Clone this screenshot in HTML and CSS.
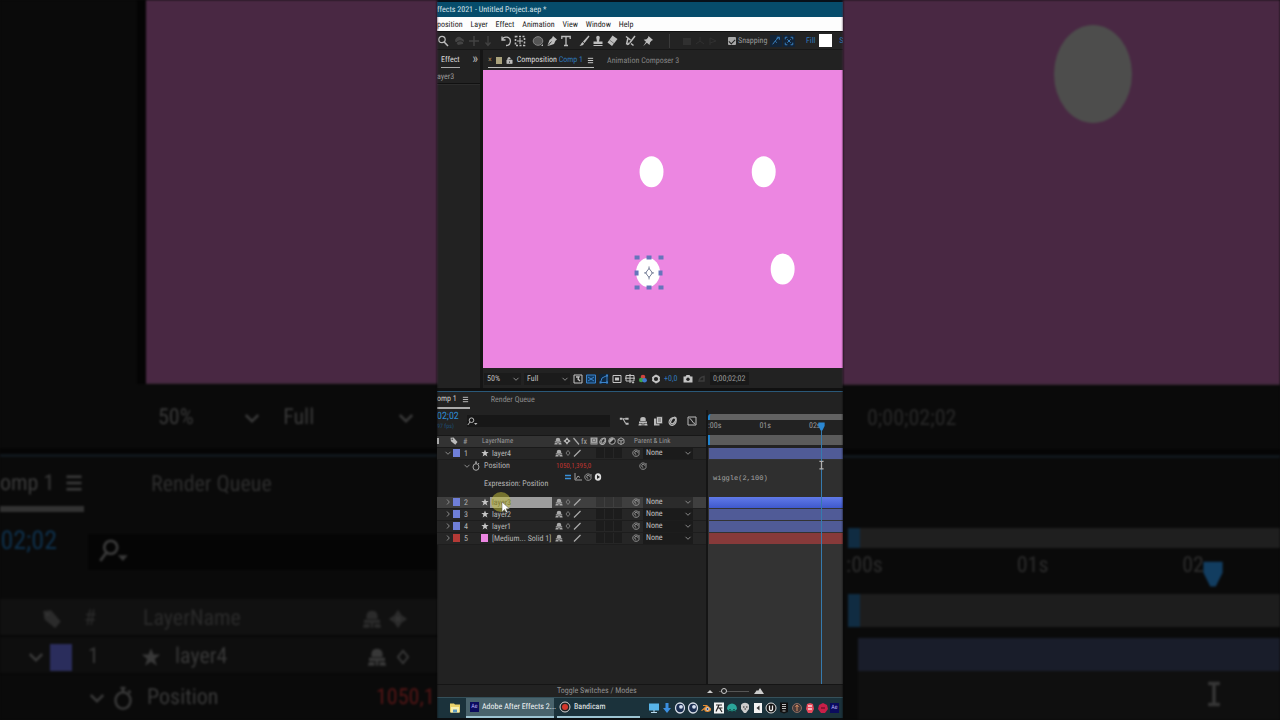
FILE: index.html
```
<!DOCTYPE html>
<html lang="en">
<head>
<meta charset="utf-8">
<title>Effects 2021 - Untitled Project.aep</title>
<link rel="stylesheet" href="styles.css">
</head>
<body>
<svg class="sprite" aria-hidden="true">
  <symbol id="chev" viewBox="0 0 8 8"><path d="M1.5 2.8 4 5.3 6.5 2.8" fill="none" stroke="currentColor"/></symbol>
  <symbol id="chev-r" viewBox="0 0 8 8"><path d="M3 1.5 5.3 4 3 6.5" fill="none" stroke="currentColor"/></symbol>
  <symbol id="menu" viewBox="0 0 8 8"><path d="M1 1.5h6M1 4h6M1 6.500h6" stroke="currentColor"/></symbol>
  <symbol id="star" viewBox="0 0 8 8"><path d="M4 .5 5 3h2.700L5.500 4.800 6.400 7.500 4 5.900 1.600 7.500 2.500 4.800.3 3H3z" fill="currentColor"/></symbol>
  <symbol id="shy" viewBox="0 0 8 8"><path d="M1.800 4V2.500a2.200 1.800 0 0 1 4.400 0V4zM.8 4.300h6.400v1.300H.8zM.8 6h2.200v1.500H.3zM5 6h2.200l.5 1.500H5zM3.500 5h1v2.500h-1z" fill="currentColor"/></symbol>
  <symbol id="sun" viewBox="0 0 8 8"><path d="M4 .3 5.500 2.500 7.700 4 5.500 5.500 4 7.700 2.500 5.500.3 4l2.200-1.500z" fill="currentColor"/><circle cx="4" cy="4" r="1.100" fill="#333"/></symbol>
  <symbol id="dia" viewBox="0 0 8 8"><path d="M4 1.500 6 4 4 6.500 2 4z" fill="none" stroke="currentColor" stroke-width=".8"/></symbol>
  <symbol id="slash" viewBox="0 0 8 8"><path d="M1 7.500 7.500 1" stroke="currentColor" stroke-width="1.200"/></symbol>
  <symbol id="bslash" viewBox="0 0 8 8"><path d="M1.500 1 7 7.500" stroke="currentColor" stroke-width="1.200"/></symbol>
  <symbol id="film" viewBox="0 0 8 8"><path d="M.5.500h7v7h-7z" fill="currentColor"/><path d="M2.500 2h3v2.500h-3zM1 6.300h6" stroke="#555" stroke-width=".6" fill="none"/></symbol>
  <symbol id="rings" viewBox="0 0 8 8"><g fill="none" stroke="currentColor" transform="rotate(35 4 4)"><ellipse cx="4" cy="3.500" rx="1.500" ry="3"/><ellipse cx="4" cy="4.500" rx="2.600" ry="3.200"/></g></symbol>
  <symbol id="half" viewBox="0 0 8 8"><circle cx="4" cy="4" r="3.300" fill="#222" stroke="currentColor"/><path d="M6.300 1.700A3.300 3.300 0 0 0 1.700 6.300z" fill="currentColor"/></symbol>
  <symbol id="cube" viewBox="0 0 8 8"><path d="M4 .8 7 2.500v3.500L4 7.500 1 6V2.500zM1 2.500 4 4l3-1.500M4 4v3.500" fill="none" stroke="currentColor" stroke-width=".9"/></symbol>
  <symbol id="whip" viewBox="0 0 8 8"><path d="M7 1v4.500c0 1-1.300 1.800-3 1.800A3.200 3.200 0 1 1 6.600 2.300M4.200 5.300a1.500 1.500 0 1 1 1.500-1.600" fill="none" stroke="currentColor" stroke-width=".9"/></symbol>
  <symbol id="watch" viewBox="0 0 8 10"><ellipse cx="4" cy="6" rx="3" ry="3.300" fill="none" stroke="currentColor"/><path d="M3 1h2M4 1v2M6.200 2l.8 1" stroke="currentColor" fill="none"/></symbol>
  <symbol id="tag" viewBox="0 0 8 8"><path d="M.5.800 3.600.5 7.500 5 5.300 7.700 1 4.200z" fill="currentColor"/><circle cx="2.200" cy="2.200" r=".7" fill="#333"/></symbol>
  <symbol id="find" viewBox="0 0 12 9"><circle cx="4.500" cy="3.200" r="2.300" fill="none" stroke="currentColor"/><path d="M3 5 .8 8" stroke="currentColor"/><path d="M7 6h3.500L8.800 8z" fill="currentColor"/></symbol>
  <symbol id="ibeam" viewBox="0 0 8 12"><path d="M1.500 1.500h5M4 2v8M1.500 10.500h5" fill="none" stroke="currentColor" stroke-width="1.500"/></symbol>
  <symbol id="head" viewBox="0 0 8 10"><path d="M.5.500h7v4L5 9.500H3L.5 4.500z" fill="currentColor"/></symbol>
  <symbol id="disc" viewBox="0 0 12 12"><ellipse cx="6" cy="6" rx="4.500" ry="5" fill="#1b2f52" stroke="#d8dfe8" stroke-width="1.300"/><circle cx="7" cy="4.800" r="1.900" fill="#d5dff0"/></symbol>
</svg>

<aside class="side side-left" aria-hidden="true">
  <div class="side-view"><div class="side-panel"></div><div class="side-canvas"></div></div>
  <div class="side-foot"><span class="side-pick">50% <svg><use href="#chev"/></svg></span><span class="side-pick wide">Full <svg><use href="#chev"/></svg></span></div>
  <div class="side-tabs"><span class="side-tab">omp 1 <svg><use href="#menu"/></svg></span><span>Render Queue</span></div>
  <div class="side-search"><span class="side-time">02;02</span><span class="side-box"><svg><use href="#find"/></svg></span></div>
  <div class="side-row side-head"><i></i><svg class="side-tag"><use href="#tag"/></svg><b>#</b><span>LayerName</span><svg><use href="#shy"/></svg><svg><use href="#sun"/></svg></div>
  <div class="side-row"><svg><use href="#chev"/></svg><i class="side-swatch"></i><b>1</b><svg class="side-star"><use href="#star"/></svg><span class="side-name">layer4</span><svg><use href="#shy"/></svg><svg><use href="#dia"/></svg></div>
  <div class="side-prop"><svg><use href="#chev"/></svg><svg class="side-watch"><use href="#watch"/></svg><span>Position</span><em>1050,1</em></div>
</aside>

<main class="app">
  <header class="title">ffects 2021 - Untitled Project.aep *</header>
  <nav class="menu"><button class="first">position</button><button>Layer</button><button>Effect</button><button>Animation</button><button>View</button><button>Window</button><button>Help</button></nav>
  <div class="tools">
    <div class="group lead"><button aria-label="Zoom"><svg viewBox="0 0 12 12"><circle cx="5" cy="4.500" r="3.200" fill="none" stroke="currentColor" stroke-width="1.200"/><path d="m7.200 7 3.800 4" stroke="currentColor" stroke-width="1.500"/></svg></button></div>
    <div class="group dim">
      <button aria-label="Orbit"><svg viewBox="0 0 12 12"><path d="M1 6c0-3 3-5 5-4l4 3-1 4-5 1z" fill="currentColor"/><path d="M2 8c3-3 6-3 9 1" stroke="#222" fill="none"/></svg></button>
      <button aria-label="Pan"><svg viewBox="0 0 12 12"><path d="M6 1v10M1 6h10" stroke="currentColor" stroke-width="1.500"/></svg></button>
      <button aria-label="Dolly"><svg viewBox="0 0 12 12"><path d="M6 1v9M3.500 7.500 6 10.500 8.500 7.500" fill="none" stroke="currentColor" stroke-width="1.200"/></svg></button>
    </div>
    <div class="group">
      <button aria-label="Rotate"><svg viewBox="0 0 12 12"><path d="M2 1.500v3.500h3.500M2.200 5A4.200 4.200 0 1 1 6 10.500" fill="none" stroke="currentColor" stroke-width="1.300"/></svg></button>
      <button aria-label="Pan behind"><svg viewBox="0 0 12 12"><path d="M1.500 1.500h9v9h-9z" fill="none" stroke="currentColor" stroke-width="1.600" stroke-dasharray="2 1.500"/><path d="M6 3v6M3 6h6" stroke="currentColor"/></svg></button>
    </div>
    <div class="group">
      <button aria-label="Ellipse"><svg viewBox="0 0 12 12"><ellipse cx="6" cy="6" rx="4.800" ry="4.300" fill="#555" stroke="#858585"/><path d="M9 11h2V9z" fill="currentColor"/></svg></button>
      <button aria-label="Pen"><svg viewBox="0 0 12 12"><path d="M7 1 11 4.500 9.500 5.700 8 9 2 11 1.500 10.500 3.500 5 6 3z" fill="currentColor"/><path d="m2 10.500 3.500-4" stroke="#222" stroke-width=".8"/></svg></button>
      <button aria-label="Type"><svg viewBox="0 0 12 12"><path d="M1.800 4V1.500h8.400V4M6 1.500v9M4 10.500h4" fill="none" stroke="currentColor" stroke-width="1.300"/></svg></button>
    </div>
    <div class="group">
      <button aria-label="Brush"><svg viewBox="0 0 12 12"><path d="M10.500.5 11.500 1.500 6.500 8 5 6.600zM4.500 7 6 8.500C5.500 10.500 3 11 1.500 10.500 3 10 3 8 4.500 7z" fill="currentColor"/></svg></button>
      <button aria-label="Clone stamp"><svg viewBox="0 0 12 12"><path d="M4.200 2.500a1.800 1.800 0 0 1 3.600 0L7 6.500h3.500V9h-9V6.500H5zM1.500 10h9v1h-9z" fill="currentColor"/></svg></button>
      <button aria-label="Eraser"><svg viewBox="0 0 12 12"><path d="M6.500.5 11.500 4 6 11 1.500 7.500z" fill="currentColor"/><path d="m3.500 5 4.500 3.500" stroke="#555" stroke-width=".7"/></svg></button>
    </div>
    <div class="group"><button aria-label="Roto brush"><svg viewBox="0 0 12 12"><path d="M11 1 6 7.500M2 1.500 4 3 2.500 9.500M4 3l2.500 2M5.500 7.500C5 9 4 9.500 3 9.500M7 8.500 9.500 10.500" fill="none" stroke="currentColor" stroke-width="1.500"/></svg></button></div>
    <div class="group"><button aria-label="Puppet pin"><svg viewBox="0 0 12 12"><path d="M6.500 1 11 5 9.500 5.800 8 7.500 7.500 10 4.800 7.700 1.200 11.200 4 6.800 1.700 4.700 4.500 4.200 6 2.700z" fill="currentColor"/></svg></button></div>
    <div class="group dim mesh">
      <button aria-label="Local axis"><svg viewBox="0 0 12 12"><path d="M2 3h8v7H2z" fill="currentColor"/></svg></button>
      <button aria-label="World axis"><svg viewBox="0 0 12 12"><path d="M6 2v4l4 3M6 6 2 9" stroke="currentColor" fill="none"/></svg></button>
      <button aria-label="View axis"><svg viewBox="0 0 12 12"><path d="M3 10V3l6 3-6 2" stroke="currentColor" fill="none"/></svg></button>
    </div>
    <label class="snap"><input type="checkbox" checked><span>Snapping</span></label>
    <div class="group snaps">
      <button aria-label="Snap edges"><svg viewBox="0 0 12 12"><path d="M2 10 5 6l2 2M6 4l4-2.500M7 1.500h3v3M5 6l2-2" fill="none" stroke="currentColor" stroke-width="1.200"/></svg></button>
      <button aria-label="Snap features"><svg viewBox="0 0 12 12"><path d="M1.500 4V1.500H4M8 1.500h2.500V4M10.500 8v2.500H8M4 10.500H1.500V8M4 4l4 4M8 4 4 8" fill="none" stroke="currentColor" stroke-width="1.200"/></svg></button>
    </div>
    <span class="fill">Fill</span><button class="fill-swatch" aria-label="Fill colour"></button><span class="fill">S</span>
  </div>

  <section class="work">
    <div class="effects">
      <div class="effects-tabs"><button class="effects-tab">Effect</button><span class="more">»</span></div>
      <div class="effects-sub">ayer3</div>
      <div class="effects-body"></div>
    </div>
    <div class="viewer">
      <div class="tabs">
        <button class="tab-on"><span class="close">×</span><i class="chip"></i><svg viewBox="0 0 8 8"><path d="M1 3.500h6v4H1zM2 3.500V2a1.500 1.500 0 0 1 3 0" fill="#bbb" stroke="#bbb" stroke-width=".8"/><path d="M3.500 5h1v1.500h-1z" fill="#222"/></svg><span>Composition <span class="blue">Comp 1</span></span><svg><use href="#menu"/></svg></button>
        <button class="tab-off">Animation Composer 3</button>
      </div>
      <div class="stage">
        <svg viewBox="0 0 360 297" preserveAspectRatio="xMinYMin meet">
          <g fill="#fff"><ellipse cx="169" cy="102" rx="12" ry="15.500"/><ellipse cx="281.500" cy="102" rx="12" ry="15.500"/><ellipse cx="300.500" cy="199.500" rx="12" ry="15.500"/><ellipse cx="165.500" cy="203" rx="12" ry="14.500"/></g>
          <g fill="#6675bb"><path d="M152 186h5v4h-5zM164 186h5v4h-5zM176 186h5v4h-5zM152 201h4v5h-4zM176 201h4v5h-4zM152 216h5v4h-5zM164 216h5v4h-5zM176 216h5v4h-5z"/></g>
          <path d="m166.500 199 3.500 4.500-3.500 4.500-3.500-4.500zM166.500 197v3M166.500 207v3M161.500 203.500h3M168.500 203.500h3" fill="none" stroke="#777f99"/>
        </svg>
      </div>
      <div class="view-foot">
        <span class="pick zoom"><select aria-label="Magnification"><option>50%</option></select><svg><use href="#chev"/></svg></span>
        <span class="pick res"><select aria-label="Resolution"><option>Full</option></select><svg><use href="#chev"/></svg></span>
        <button aria-label="Fast previews"><svg viewBox="0 0 10 10"><path d="M1 1h8v8H1z" fill="none" stroke="currentColor"/><path d="M3 3h3L5 5l2 2" fill="none" stroke="currentColor" stroke-width="1.300"/></svg></button>
        <button class="lit" aria-label="Transparency grid"><svg viewBox="0 0 10 10"><path d="M.5 1h9v8h-9z" fill="#123a61" stroke="currentColor"/><path d="m2 3 6 4M8 3 2 7" stroke="currentColor"/></svg></button>
        <button class="lit" aria-label="Mask visibility"><svg viewBox="0 0 10 10"><path d="M1.500 8.500 3 4l5-2.500v7z" fill="#102a45" stroke="currentColor"/><path d="M7 .5h2v2H7zM.5 7.500h2v2h-2zM7 7.500h2v2H7z" fill="currentColor"/></svg></button>
        <button aria-label="Region of interest"><svg viewBox="0 0 10 10"><path d="M1 1.500h8v7H1z" fill="none" stroke="currentColor"/><path d="M3 3.500h4v3H3z" fill="currentColor"/></svg></button>
        <button aria-label="Guides"><svg viewBox="0 0 10 10"><path d="M1 1.500h8v5.500H1zM5 0v9M0 4.200h10" fill="none" stroke="currentColor"/><path d="M6.500 8h3L8 9.700z" fill="currentColor"/></svg></button>
        <button aria-label="Channels"><svg viewBox="0 0 10 10"><circle cx="5" cy="3" r="2.300" fill="#d0453f"/><circle cx="3.200" cy="6" r="2.300" fill="#3fa04c"/><circle cx="6.600" cy="6.200" r="2.300" fill="#3f79d0"/></svg></button>
        <button aria-label="Exposure"><svg viewBox="0 0 10 10"><circle cx="5" cy="5" r="3" fill="none" stroke="currentColor" stroke-width="1.800"/><path d="M5 .5v2M5 7.500v2M1 3l1.500 1M9 3 7.500 4M1 7l1.500-1M9 7 7.500 6" stroke="currentColor"/></svg></button>
        <span class="blue exposure">+0,0</span>
        <button aria-label="Snapshot"><svg viewBox="0 0 10 10"><path d="M.5 2.500h2l1-1.500h3l1 1.500h2v6h-9z" fill="currentColor"/><circle cx="5" cy="5.300" r="1.700" fill="#222"/></svg></button>
        <button class="faint" aria-label="Show snapshot"><svg viewBox="0 0 10 10"><path d="M3 8c0-4 2-5 5-5.500V7H4" fill="none" stroke="currentColor" stroke-width="1.500"/></svg></button>
        <span class="code">0;00;02;02</span>
      </div>
    </div>
  </section>

  <section class="timeline">
    <div class="time-tabs"><button class="time-tab">omp 1 <svg><use href="#menu"/></svg></button><button class="queue">Render Queue</button></div>
    <div class="time-body">
      <div class="layers">
        <div class="search-row">
          <div class="clock"><strong>02;02</strong><small>97 fps)</small></div>
          <label class="search"><svg><use href="#find"/></svg><input type="text" aria-label="Search layers"></label>
          <div class="modes">
            <button aria-label="Flowchart"><svg viewBox="0 0 12 10"><path d="M1 1h3v2.500H1zM7.500 1h4v2.500h-4zM8 7h3.500v2.500H8z" fill="currentColor"/><path d="M4 2.300h4M5 2.500 8 8" fill="none" stroke="currentColor" stroke-width="1.300"/></svg></button>
            <button aria-label="Hide shy layers"><svg viewBox="0 0 8 8"><use href="#shy"/></svg></button>
            <button aria-label="Frame blending"><svg viewBox="0 0 10 10"><path d="M1 2.500h5.500v7H1z" fill="currentColor"/><path d="M3.500.7h6v7h-6z" fill="#c5c5c5" stroke="#222" stroke-width=".6"/><path d="M5 3h3M5 5h3" stroke="#333" stroke-width=".7"/></svg></button>
            <button aria-label="Motion blur"><svg viewBox="0 0 8 8"><use href="#rings"/></svg></button>
            <button class="graph" aria-label="Graph editor"><svg viewBox="0 0 10 10"><path d="M1 1h8v8H1zM2.500 2.500C5 2.500 5 7.500 8 7.500" fill="none" stroke="currentColor"/></svg></button>
          </div>
        </div>
        <div class="row head">
          <i class="lock"></i><svg class="c-tag"><use href="#tag"/></svg><span class="c-num">#</span><span class="c-title">LayerName</span>
          <span class="switches"><svg><use href="#shy"/></svg><svg><use href="#sun"/></svg><svg><use href="#bslash"/></svg><em>fx</em><svg><use href="#film"/></svg><svg><use href="#rings"/></svg><svg><use href="#half"/></svg><svg><use href="#cube"/></svg></span>
          <span class="parent">Parent &amp; Link</span>
        </div>
        <div class="row">
          <svg class="c-open"><use href="#chev"/></svg><i class="swatch"></i><span class="c-num">1</span><svg class="c-star"><use href="#star"/></svg><span class="name">layer4</span>
          <span class="switches"><svg><use href="#shy"/></svg><svg><use href="#dia"/></svg><svg><use href="#slash"/></svg><i></i><b></b><b></b><b></b></span>
          <svg class="c-whip"><use href="#whip"/></svg><span class="pick link"><select aria-label="Parent of layer4"><option>None</option></select><svg><use href="#chev"/></svg></span>
        </div>
        <div class="prop">
          <svg class="c-open"><use href="#chev"/></svg><svg class="c-watch"><use href="#watch"/></svg><span class="prop-name">Position</span><span class="value">1050,1,395,0</span><svg class="c-whip"><use href="#whip"/></svg>
        </div>
        <div class="expr">
          <span class="expr-tools"><svg class="eq" viewBox="0 0 8 8"><path d="M1 2.500h6M1 5.500h6" stroke="currentColor" stroke-width="1.400"/></svg><svg viewBox="0 0 8 8"><path d="M1 0v7h7M2 6 4 3l2 1.500" fill="none" stroke="currentColor"/></svg><svg><use href="#whip"/></svg><svg viewBox="0 0 8 8"><ellipse cx="4" cy="4" rx="3.200" ry="3.800" fill="#ddd"/><path d="M3 2v4l3-2z" fill="#222"/></svg></span>
          <span class="expr-name">Expression: Position</span>
        </div>
        <div class="row selected">
          <svg class="c-open"><use href="#chev-r"/></svg><i class="swatch"></i><span class="c-num">2</span><svg class="c-star"><use href="#star"/></svg><span class="name">layer3</span>
          <span class="switches"><svg><use href="#shy"/></svg><svg><use href="#dia"/></svg><svg><use href="#slash"/></svg><i></i><b></b><b></b><b></b></span>
          <svg class="c-whip"><use href="#whip"/></svg><span class="pick link"><select aria-label="Parent of layer3"><option>None</option></select><svg><use href="#chev"/></svg></span>
          <svg class="pointer" viewBox="0 0 20 28"><circle cx="10" cy="10" r="10" fill="#c9c43a" opacity=".5"/><path d="M11 10v10l2.500-2.500 1.500 3 1.500-.8-1.500-2.900h3.500z" fill="#fff" stroke="#555" stroke-width=".5"/></svg>
        </div>
        <div class="row">
          <svg class="c-open"><use href="#chev-r"/></svg><i class="swatch"></i><span class="c-num">3</span><svg class="c-star"><use href="#star"/></svg><span class="name">layer2</span>
          <span class="switches"><svg><use href="#shy"/></svg><svg><use href="#dia"/></svg><svg><use href="#slash"/></svg><i></i><b></b><b></b><b></b></span>
          <svg class="c-whip"><use href="#whip"/></svg><span class="pick link"><select aria-label="Parent of layer2"><option>None</option></select><svg><use href="#chev"/></svg></span>
        </div>
        <div class="row">
          <svg class="c-open"><use href="#chev-r"/></svg><i class="swatch"></i><span class="c-num">4</span><svg class="c-star"><use href="#star"/></svg><span class="name">layer1</span>
          <span class="switches"><svg><use href="#shy"/></svg><svg><use href="#dia"/></svg><svg><use href="#slash"/></svg><i></i><b></b><b></b><b></b></span>
          <svg class="c-whip"><use href="#whip"/></svg><span class="pick link"><select aria-label="Parent of layer1"><option>None</option></select><svg><use href="#chev"/></svg></span>
        </div>
        <div class="row">
          <svg class="c-open"><use href="#chev-r"/></svg><i class="swatch red"></i><span class="c-num">5</span><i class="solid"></i><span class="name">[Medium... Solid 1]</span>
          <span class="switches"><svg><use href="#shy"/></svg><i></i><svg><use href="#slash"/></svg><i></i><b></b><b></b><b></b></span>
          <svg class="c-whip"><use href="#whip"/></svg><span class="pick link"><select aria-label="Parent of solid"><option>None</option></select><svg><use href="#chev"/></svg></span>
        </div>
      </div>
      <div class="tracks">
        <div class="navigator"></div>
        <div class="ruler"><span>:00s</span><span>01s</span><span>02s</span></div>
        <div class="workarea"></div>
        <div class="bar"></div>
        <div class="code-box">wiggle(2,100)</div>
        <div class="bar bright"></div>
        <div class="bar"></div>
        <div class="bar"></div>
        <div class="bar solid-bar"></div>
        <div class="playhead"><svg class="knob"><use href="#head"/></svg><svg class="beam"><use href="#ibeam"/></svg></div>
      </div>
    </div>
    <div class="time-foot">
      <button class="toggle">Toggle Switches / Modes</button>
      <label class="scale"><svg viewBox="0 0 8 8"><path d="M1 6 4 3l3 3z" fill="currentColor"/></svg><input type="range" value="10" aria-label="Timeline zoom"><svg class="big" viewBox="0 0 10 8"><path d="m0 7 3-4 1 1 2-3 4 6z" fill="currentColor"/></svg></label>
    </div>
  </section>

  <footer class="taskbar">
    <button class="folder" aria-label="Files"><svg viewBox="0 0 12 12"><path d="M1 1.500h4l1 1h5v8H1z" fill="#e9d26a"/><path d="M2 5h8v5.500H2z" fill="#f6efb0"/><path d="M4 7.500h4v3H4z" fill="#5b9bc0"/></svg></button>
    <button class="task active"><span class="ae">Ae</span>Adobe After Effects 2...</button>
    <button class="task"><svg viewBox="0 0 12 12"><circle cx="6" cy="6" r="5" fill="#222" stroke="#d5d5d5"/><circle cx="6" cy="6" r="3" fill="#d5382c"/></svg>Bandicam</button>
    <div class="tray">
      <svg viewBox="0 0 12 12"><path d="M1 1.500h10v7H1z" fill="#58b4e8"/><path d="M3 10.500h6M6 8v2" stroke="#b6d9ee"/></svg>
      <svg viewBox="0 0 12 12"><path d="M4.500 1h3v5H10l-4 5-4-5h2.500z" fill="#3b8fe0"/></svg>
      <svg><use href="#disc"/></svg>
      <svg><use href="#disc"/></svg>
      <svg viewBox="0 0 12 12"><path d="M1 8.500 6 4H3V3h4l4 3.500a3.500 3 0 1 1-7 1L2 9z" fill="#e08a32"/><circle cx="7.500" cy="7" r="1.500" fill="#274f86" stroke="#fff" stroke-width=".7"/></svg>
      <svg viewBox="0 0 12 12"><path d="M1 .5h10v11H1z" fill="#f2f2f2"/><path d="M3 3h6M6 3 3 9.500M5 6h4.500M6.500 6 9 10" stroke="#222" fill="none" stroke-width="1.200"/></svg>
      <svg viewBox="0 0 12 12"><path d="M1 7a5 5.500 0 0 1 10 0L9 9H3z" fill="#2ba59a"/><path d="m2 10 2-3 2 3 2-3 2 3" stroke="#13564f" fill="none"/></svg>
      <svg viewBox="0 0 12 12"><path d="M2 3c2-3 6-3 8 0v4L7 11H5L2 7z" fill="#ccc"/><path d="M4 5h1.500M7 5h1.500M5.500 7h1.500" stroke="#222"/></svg>
      <svg viewBox="0 0 12 12"><path d="M2 1h8v10H2z" fill="#f2f2f2"/><path d="M7.500 3.500 4.500 6l3 2.500z" fill="#333"/></svg>
      <svg viewBox="0 0 12 12"><circle cx="6" cy="6" r="5" fill="#111" stroke="#ddd"/><path d="M4.500 3.500v4c.5 1.500 2.500 1.500 3 0v-4" fill="none" stroke="#eee" stroke-width="1.300"/></svg>
      <svg viewBox="0 0 12 12"><path d="M2 .5h8V10l-4 1.500L2 10z" fill="#111"/><path d="M4 2.500h4M4 4.500h4M4 6.500h4M4.500 9h3" stroke="#bbb"/></svg>
      <svg viewBox="0 0 12 12"><circle cx="6" cy="6" r="4.500" fill="#493a38" stroke="#8a6d63"/><path d="M6 3v6M4.500 5 6 3l1.500 2" stroke="#d38b60" fill="none"/></svg>
      <svg viewBox="0 0 12 12"><path d="M3 2 6 1l3 1 1 5-2 4H4L2 7z" fill="#e84a5c"/><path d="M4 4h4M4 7h4" stroke="#fbd5da" stroke-width="1.300"/></svg>
      <svg viewBox="0 0 12 12"><path d="m6 1 4 2 1 4-3 4H4L1 7l1-4z" fill="#c81f48"/><path d="M4 6h4" stroke="#7b0f2c" stroke-width="1.500"/></svg>
      <span class="ae">Ae</span>
    </div>
  </footer>
</main>

<aside class="side side-right" aria-hidden="true">
  <div class="side-view"><div class="side-canvas"><i class="dot"></i></div></div>
  <div class="side-foot"><span>0;00;02;02</span></div>
  <div class="side-tabs"></div>
  <div class="side-nav"></div>
  <div class="side-ruler"><span>:00s</span><span>01s</span><span>02</span><svg class="side-knob"><use href="#head"/></svg></div>
  <div class="side-area"></div>
  <div class="side-bar"></div>
  <div class="side-rest"><svg><use href="#ibeam"/></svg></div>
</aside>
</body>
</html>
```

FILE: styles.css
```
* { box-sizing: border-box; }
body {
  margin: 0;
  height: 100vh;
  display: grid;
  grid-template-columns: 437fr 406fr 437fr;
  background: #0a0a0a;
  color: #b4b4b4;
  font: 8px/12px "Liberation Sans Narrow", "Roboto Condensed", "Liberation Sans", sans-serif;
  text-rendering: geometricPrecision;
  overflow: hidden;
}
button, input, select { margin: 0; padding: 0; border: 0; background: none; color: inherit; font: inherit; text-rendering: inherit; letter-spacing: inherit; }
i, em, b { font-style: normal; font-weight: normal; }
svg { display: block; width: 8px; height: 8px; flex: none; }
.sprite { position: absolute; width: 0; height: 0; }
.blue { color: #2f78bb; }

/* centre application */
.app { display: flex; flex-direction: column; min-width: 0; overflow: hidden; background: #222; white-space: nowrap; }
.title { height: 17px; border-top: 2px solid #071019; background: #064c6b; color: #d5e2e9; line-height: 16px; flex: none; }
.menu { display: flex; gap: 8px; height: 15px; padding-top: 1px; flex: none; background: #fdfdfd; color: #222; border-bottom: 1px solid #111; }
.tools { display: flex; align-items: center; gap: 4px; height: 18px; flex: none; background: #232323; border-bottom: 1px solid #171717; color: #bdbdbd; }
.group { display: flex; flex: none; }
.group button { width: 14px; height: 14px; display: grid; place-items: center; }
.group svg { width: 12px; height: 12px; }
.lead { width: 12px; overflow: hidden; }
.lead button { width: 8px; }
.dim { color: #434343; }
.mesh { margin-left: 10px; padding-left: 10px; border-left: 1px solid #3a3a3a; color: #303030; }
.mesh button { width: 13px; }
.snap { display: flex; align-items: center; gap: 2px; width: 38px; color: #999; margin-left: 5px; flex: none; }
.snap input { appearance: none; width: 8px; height: 8px; background: #a8a8a8; border-radius: 1px; display: grid; place-items: center; flex: none; }
.snap input::after { content: ""; width: 5px; height: 3px; border: solid #222; border-width: 0 0 1px 1px; rotate: -45deg; }
.snaps { gap: 1px; }
.snaps button { width: 12px; height: 12px; background: #122337; color: #397fbd; }
.snaps svg { width: 10px; height: 10px; }
.fill { color: #2f78bb; margin-left: 7px; }
.fill-swatch { width: 13px; height: 13px; margin-right: -4px; background: #fff; flex: none; }

.work { display: flex; flex: 340 1 0; min-height: 0; border-bottom: 3px solid #101010; }
.effects { width: 46px; flex: none; display: flex; flex-direction: column; border-right: 3px solid #151515; }
.effects-tabs { display: flex; justify-content: space-between; height: 20px; padding: 0 2px 0 4px; flex: none; }
.effects-tab { height: 18px; color: #ddd; border-bottom: 1px solid #aaa; padding-top: 3px; }
.more { font-size: 14px; line-height: 18px; }
.effects-sub { height: 14px; padding-top: 1px; color: #999; border-bottom: 1px solid #111; flex: none; }
.effects-body { flex: 1; border-top: 1px solid #2c2c2c; }
.viewer { flex: 1; min-width: 0; display: flex; flex-direction: column; }
.tabs { display: flex; gap: 13px; height: 20px; flex: none; padding: 0 5px; }
.tab-on { display: flex; align-items: center; gap: 4px; height: 18px; padding-top: 3px; border-bottom: 1px solid #bbb; color: #ddd; }
.tab-on svg { width: 7px; height: 7px; }
.close { color: #a58259; }
.chip { width: 6px; height: 7px; background: #aaa27c; }
.tab-off { height: 18px; padding-top: 3px; color: #858585; }
.stage { flex: 1; min-height: 0; background: #ec86e1; border-right: 1px solid #c86fbe; }
.stage svg { width: 100%; height: 100%; }
.view-foot { height: 20px; flex: none; display: flex; align-items: center; gap: 3px; padding: 2px 1px 0; color: #c4c4c4; }
.pick { display: flex; align-items: center; position: relative; background: #1b1b1b; color: #c0c0c0; }
.pick select { appearance: none; width: 100%; height: 12px; padding: 0 3px; line-height: 12px; }
.pick svg { position: absolute; right: 1px; color: #888; pointer-events: none; }
.zoom { width: 37px; }
.res { width: 46px; }
.view-foot button { width: 10px; height: 10px; flex: none; }
.view-foot button svg { width: 10px; height: 10px; }
.lit { color: #3c83ca; background: #0f2439; }
.view-foot .faint { color: #3c3c3c; }
.exposure { width: 16px; }
.code { background: #191919; color: #999; padding: 0 3px; margin-left: 1px; line-height: 13px; }

/* timeline */
.timeline { flex: 307 1 0; min-height: 0; display: flex; flex-direction: column; border-top: 1px solid #2a5878; }
.time-tabs { display: flex; gap: 21px; height: 18px; flex: none; }
.time-tab { display: flex; gap: 5px; align-items: center; height: 17px; padding-right: 1px; color: #ccc; border-bottom: 2px solid #aaa; }
.time-tab svg { width: 7px; height: 7px; }
.queue { height: 17px; color: #8a8a8a; }
.time-body { flex: 1; min-height: 0; display: flex; }
.layers { width: 269px; flex: none; }
.search-row { display: flex; align-items: center; height: 26px; padding-bottom: 2px; border-bottom: 1px solid #171717; }
.clock { width: 30px; height: 22px; flex: none; color: #2d8ad0; }
.clock strong { display: block; font-size: 10px; line-height: 13px; font-weight: normal; }
.clock small { display: block; font-size: 6px; line-height: 8px; color: #1d4f78; }
.search { display: flex; align-items: center; width: 143px; height: 12px; background: #171717; color: #bbb; }
.search svg { width: 12px; height: 9px; }
.search input { flex: 1; min-width: 0; height: 12px; outline: none; }
.modes { display: flex; align-items: center; gap: 5px; padding-left: 9px; color: #bbb; }
.modes button, .modes svg { width: 10px; height: 10px; }
.modes button:first-child { margin-right: 4px; }
.modes .graph { margin-left: 4px; }
.row { display: flex; align-items: center; height: 12px; padding-left: 6px; position: relative; background: #262626; border-bottom: 1px solid #1d1d1d; line-height: 11px; }
.head { background: #333; color: #999; padding-left: 0; border-color: #1a1a1a; }
.lock { width: 2px; height: 6px; background: #aaa; }
.c-tag { margin: 0 2px 0 11px; color: #bbb; }
.head .c-num { width: 20px; padding-left: 3px; }
.c-title { width: 74px; font-size: 7px; padding-left: 2px; }
.parent { font-size: 7px; padding-left: 9px; }
.c-open { width: 10px; color: #8a8a8a; }
.swatch { width: 7px; height: 8px; background: #6f7fd8; flex: none; }
.red { background: #b43a36; }
.c-num { width: 20px; padding-left: 4px; flex: none; }
.c-star { width: 10px; color: #c5c5c5; }
.name { width: 62px; padding-left: 2px; flex: none; }
.selected { background: #3f3f3f; }
.selected .name { background: #9d9d9d; color: #333; align-self: stretch; }
.solid { width: 7px; height: 8px; margin: 0 2px 0 1px; background: #ec86e1; flex: none; }
.switches { display: grid; grid-template-columns: repeat(8, 8px); column-gap: 1px; align-items: center; width: 72px; padding-left: 3px; flex: none; margin-right: 8px; color: #aaa; }
.head .switches { margin-right: 0; padding-left: 0; width: 71px; }
.switches svg:nth-child(2) { color: #888; }
.head .switches svg:nth-child(2) { color: #bbb; }
.switches b { height: 10px; margin-left: 5px; margin-right: -5px; background: #1c1c1c; }
.switches i + b { grid-column: 5; }
.selected .switches b { background: #333; }
.c-whip { color: #999; }
.link { width: 50px; height: 11px; margin-left: 3px; }
.selected .link { background: #2b2b2b; }
.prop { display: flex; align-items: center; height: 12px; padding-left: 25px; }
.c-watch { height: 10px; margin: 0 4px 0 0; color: #aaa; }
.prop-name { width: 72px; }
.value { width: 83px; font-size: 7px; color: #bf3430; }
.expr { height: 25px; }
.expr-tools { display: flex; gap: 2px; padding: 1px 0 0 127px; height: 8px; color: #a0a0a0; }
.eq { color: #3a90d8; }
.expr-name { display: block; padding-left: 47px; line-height: 8px; }
.tracks { flex: 1; min-width: 0; position: relative; background: #333; border-left: 2px solid #151515; overflow: hidden; padding-top: 4px; }
.tracks::before { content: ""; position: absolute; inset: 0 0 auto; height: 38px; background: #222; }
.navigator, .ruler, .workarea { position: relative; }
.navigator { height: 6px; background: #626262; border-left: 2px solid #2284ce; border-radius: 3px 0 0 0; }
.ruler { display: flex; gap: 38px; height: 15px; line-height: 12px; color: #999; }
.workarea { height: 10px; margin-bottom: 3px; background: #5b5b5b; border-left: 2px solid #2284ce; }
.bar { height: 11px; margin: 0 0 1px 1px; background: #505b97; }
.bright { background: linear-gradient(#607ae8, #3f59cc); }
.solid-bar { background: #873a3a; }
.code-box { height: 37px; padding: 13px 0 0 5px; background: #2f2f2f; color: #a5a5a5; font: 7px/12px "Liberation Mono", monospace; }
.playhead { position: absolute; left: 113px; top: 13px; bottom: 0; width: 1px; background: #357aae; }
.knob { position: absolute; left: -4px; top: -1px; height: 9px; width: 9px; color: #2a87d2; }
.beam { position: absolute; left: -4px; top: 37px; width: 9px; height: 10px; color: #b0b0b0; }
.pointer { position: absolute; left: 54px; top: -5px; width: 20px; height: 28px; z-index: 2; }
.time-foot { display: flex; height: 13px; flex: none; border-top: 1px solid #151515; }
.toggle { width: 269px; padding-left: 120px; text-align: left; color: #909090; }
.scale { display: flex; align-items: center; gap: 5px; color: #ccc; }
.scale svg { width: 8px; }
.scale .big { width: 10px; }
.scale input { appearance: none; width: 30px; height: 1px; background: #555; }
.scale input::-webkit-slider-thumb { appearance: none; width: 6px; height: 6px; border: 1px solid #ccc; border-radius: 50%; background: #222; }

/* taskbar */
.taskbar { display: flex; align-items: center; height: 23px; flex: none; background: #1b323b; border-top: 1px solid #35505a; border-bottom: 2px solid #0b0e10; color: #eef2f4; }
.taskbar svg { width: 12px; height: 12px; }
.folder { margin: 0 5px 0 12px; }
.task { display: flex; align-items: center; gap: 3px; height: 20px; width: 83px; padding: 0 2px; border-bottom: 2px solid #9dc4d2; flex: none; }
.active { width: 88px; margin-right: 3px; background: #49636c; padding-left: 4px; }
.ae { width: 9px; height: 10px; background: #0b0b5e; color: #b9b3f5; font-size: 6px; line-height: 10px; text-align: center; flex: none; }
.tray { display: flex; align-items: center; gap: 1px; padding-left: 8px; }
.tray svg { width: 12px; height: 12px; }

/* dimmed, enlarged side backdrop */
.side { display: flex; flex-direction: column; min-width: 0; overflow: hidden; background: #0a0a0a; color: #383838; font-size: 22px; line-height: 30px; white-space: nowrap; filter: blur(1px); }
.side svg { width: 20px; height: 20px; }
.side-view { display: flex; flex: 1; min-height: 0; }
.side-panel { width: 146px; border-right: 9px solid #040404; flex: none; }
.side-canvas { flex: 1; background: #492843; position: relative; border-bottom: 2px solid #40283b; }
.dot { position: absolute; left: 211px; top: 25px; width: 78px; height: 98px; border-radius: 50%; background: #4d4d4c; }
.side-foot { height: 70px; flex: none; display: flex; align-items: center; padding: 4px 0 0 158px; border-bottom: 6px solid #050505; }
.side-pick { display: flex; justify-content: space-between; align-items: center; width: 105px; margin-right: 21px; }
.side-pick.wide { width: 134px; }
.side-tabs { height: 58px; flex: none; display: flex; gap: 67px; line-height: 55px; border-top: 3px solid #10171c; color: #2e2e2e; }
.side-tab { display: flex; align-items: center; justify-content: space-between; width: 84px; height: 55px; padding-top: 3px; border-bottom: 6px solid #323232; color: #3a3a3a; }
.side-search { height: 83px; flex: none; display: flex; padding-top: 14px; }
.side-time { display: flex; justify-content: flex-end; width: 57px; margin-right: 31px; color: #0e304b; font-size: 26px; height: 30px; }
.side-box { flex: 1; height: 36px; margin-top: 8px; padding: 4px 10px; background: #050505; }
.side-box svg { width: 34px; height: 26px; }
.side-row { height: 38px; flex: none; display: flex; align-items: center; padding: 4px 0 0 26px; background: #0e0e0e; border-bottom: 2px solid #070707; }
.side-row.side-head { background: #111; color: #2b2b2b; padding-left: 0; }
.side-head i { width: 42px; }
.side-head .side-tag { height: 26px; }
.side-head b + span { width: 225px; padding-left: 6px; }
.side-row svg { margin-right: 6px; }
.side-row > svg:first-child { margin-right: 4px; }
.side-swatch { width: 22px; height: 27px; background: #2a2d5c; }
.side-row b { width: 69px; padding-left: 16px; }
.side-name { width: 200px; padding-left: 8px; }
.side-prop { height: 45px; flex: none; display: flex; align-items: center; padding-left: 87px; }
.side-search + .side-row + .side-row { margin-bottom: 0; }
.side-prop .side-watch { height: 30px; margin: 0 14px 0 6px; }
.side-prop span { width: 229px; }
.side-prop em { color: #551616; }
.side-left .side-view { margin-bottom: -4px; }
.side-left .side-foot { margin-top: 4px; }
.side-left .side-search { height: 87px; }
.side-right .side-foot { padding-left: 24px; color: #282828; }
.side-right .side-tabs { height: 73px; }
.side-nav { height: 20px; flex: none; margin-left: 5px; background: #1f1f1f; border-left: 12px solid #102c42; }
.side-ruler { position: relative; height: 46px; flex: none; display: flex; justify-content: space-between; padding: 3px 76px 0 3px; color: #2c2c2c; }
.side-ruler .side-knob { position: absolute; right: 56px; top: 11px; height: 30px; width: 22px; color: #123d60; }
.side-area { height: 33px; flex: none; margin: 0 0 11px 5px; background: #1d1d1d; border-left: 12px solid #102c42; }
.side-bar { height: 33px; flex: none; margin-left: 15px; background: #191d2a; }
.side-rest { height: 49px; flex: none; display: flex; justify-content: flex-end; padding: 9px 56px 0 0; margin-left: 15px; background: #0f0f0f; }
.side-rest svg { height: 28px; color: #363636; }
```
